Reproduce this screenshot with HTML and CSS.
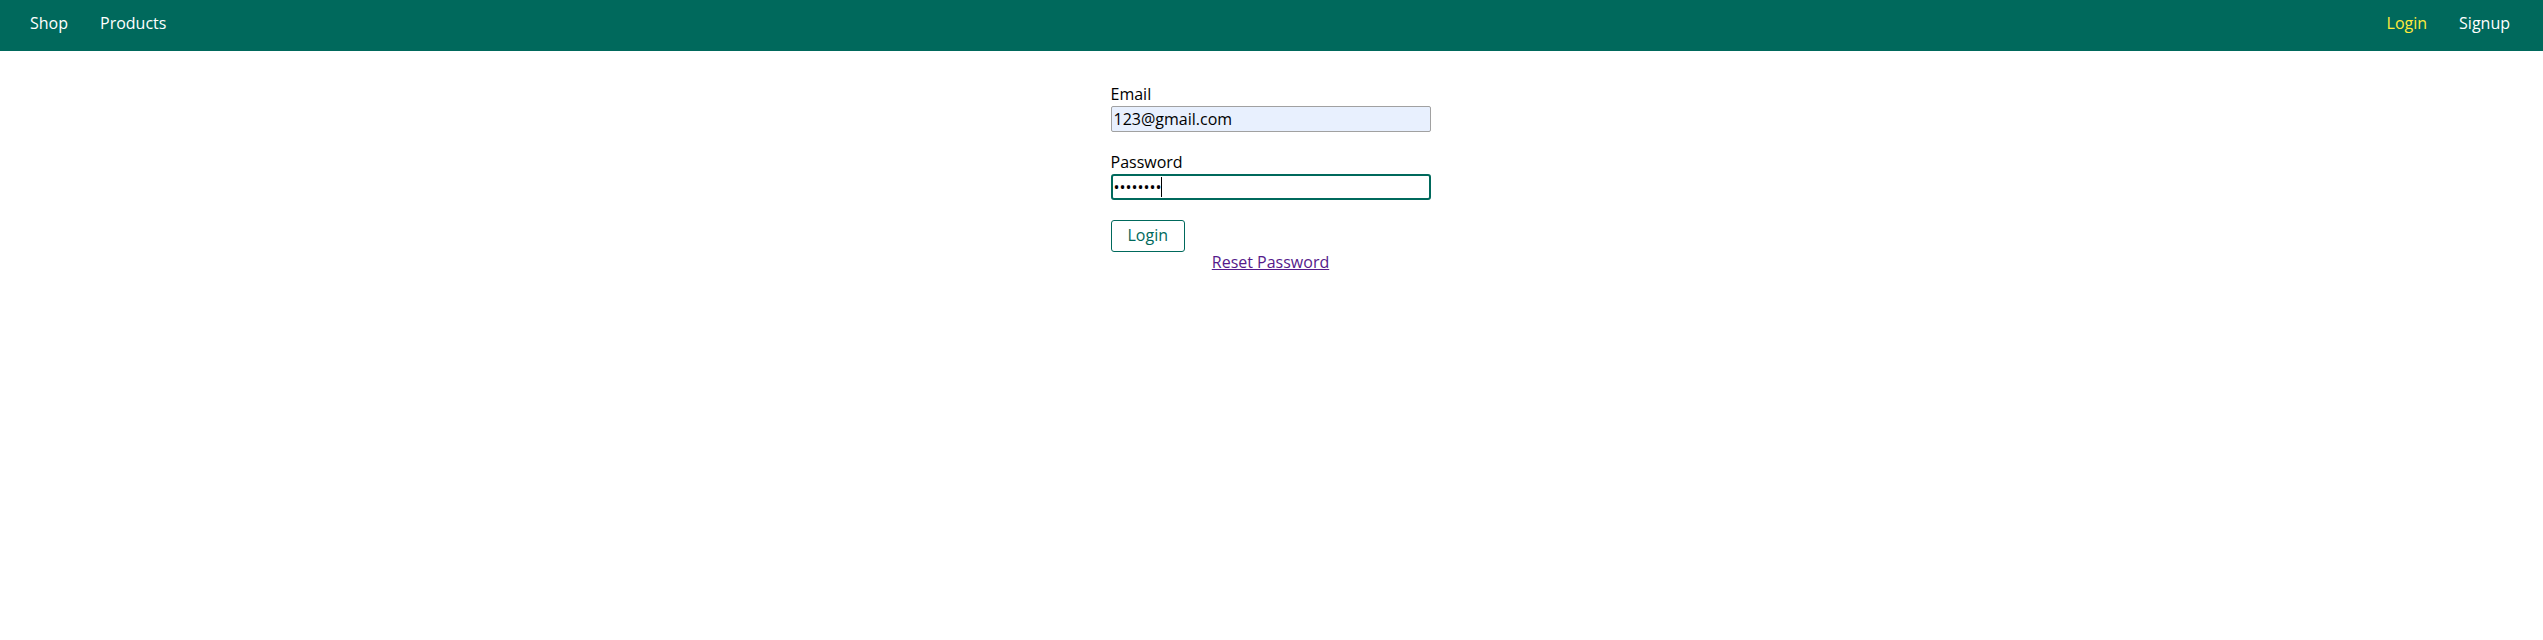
FILE: index.html
```html
<!DOCTYPE html>
<html lang="en">
<head>
<meta charset="UTF-8">
<title>Login</title>
<link rel="stylesheet" href="styles.css">
</head>
<body>
<header class="main-header">
  <nav class="main-header__nav">
    <ul class="main-header__item-list">
      <li class="main-header__item"><a href="#">Shop</a></li>
      <li class="main-header__item"><a href="#">Products</a></li>
    </ul>
    <ul class="main-header__item-list">
      <li class="main-header__item"><a class="active" href="#">Login</a></li>
      <li class="main-header__item"><a href="#">Signup</a></li>
    </ul>
  </nav>
</header>
<main class="main">
  <form class="login-form">
    <div class="form-control">
      <label for="email">Email</label>
      <input class="autofilled" type="email" name="email" id="email" value="123@gmail.com">
    </div>
    <div class="form-control">
      <label for="password">Password</label>
      <div class="input-wrap">
        <input class="focused" type="password" name="password" id="password" value="12345678">
        <span class="caret"></span>
      </div>
    </div>
    <button class="btn" type="button">Login</button>
    <div class="centered">
      <a class="visited" href="#">Reset Password</a>
    </div>
  </form>
</main>
</body>
</html>
```
FILE: styles.css
```css
* {
  box-sizing: border-box;
}

html, body {
  margin: 0;
  padding: 0;
}

body {
  font-family: "Open Sans", "Liberation Sans", sans-serif;
  font-size: 16px;
  line-height: 21.8px;
  color: #000;
  background: #fff;
}

.main-header {
  width: 100%;
  height: 51px;
  background-color: #00695c;
  padding: 0 17px 3px 14px;
  display: flex;
  align-items: center;
}

.main-header__nav {
  height: 100%;
  width: 100%;
  display: flex;
  align-items: center;
  justify-content: space-between;
}

.main-header__item-list {
  list-style: none;
  margin: 0;
  padding: 0;
  display: flex;
}

.main-header__item {
  margin: 0 16px;
  padding: 0;
}

.main-header__item a {
  text-decoration: none;
  color: #fff;
}

.main-header__item a.active {
  color: #ffeb3b;
}

.main {
  padding: 17px 18px 16px 16px;
}

.login-form {
  width: 320px;
  margin: 0 auto;
  display: block;
}

.form-control {
  margin: 16px 0;
  display: flex;
  flex-direction: column;
}

.form-control label,
.form-control input {
  display: block;
  width: 100%;
}

.form-control input {
  margin: 0 0 4px;
  border: 1px solid #a1a1a1;
  border-radius: 2px;
  font: inherit;
  line-height: 21.8px;
  height: 26px;
  padding: 1px 2px;
  color: #000;
  background: #fff;
  outline: none;
}

.form-control input.autofilled {
  background-color: #e8f0fe;
}

.form-control input.focused {
  border: 2px solid #00695c;
  border-radius: 3px;
  padding: 0 1px;
}

.input-wrap {
  position: relative;
}

.caret {
  position: absolute;
  left: 50px;
  top: 3px;
  width: 1px;
  height: 20px;
  background: #000;
}

.btn {
  cursor: pointer;
  font: inherit;
  line-height: 21.8px;
  height: 32px;
  border: 1px solid #00695c;
  color: #00695c;
  background: #fff;
  border-radius: 3px;
  padding: 4px 16px;
  margin: 0;
  display: inline-block;
  vertical-align: top;
}

.centered {
  text-align: center;
}

.centered a,
.centered a.visited {
  color: #551a8b;
  text-decoration: underline;
}
```
